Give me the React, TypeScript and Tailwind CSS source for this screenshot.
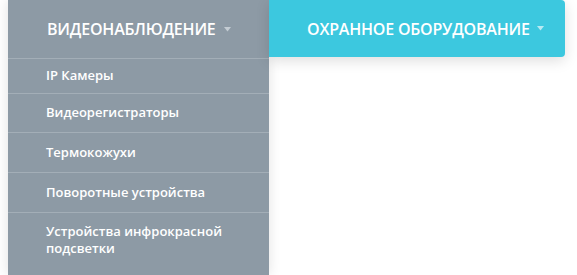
const items = [
  { label: 'IP Камеры', h: 'h-[35px]' },
  { label: 'Видеорегистраторы', h: 'h-[39px]' },
  { label: 'Термокожухи', h: 'h-[40px]' },
  { label: 'Поворотные устройства', h: 'h-[40px]' },
];

function Caret({ className }: { className?: string }) {
  return (
    <svg width="7" height="5" viewBox="0 0 7 5" className={className}>
      <path d="M0 0 L7 0 L3.5 4.5 Z" fill="currentColor" />
    </svg>
  );
}

export default function App() {
  return (
    <div
      className="flex h-[275px] w-[577px] overflow-hidden bg-white"
      style={{ fontFamily: '"Open Sans", "Noto Sans", sans-serif' }}
    >
      <nav className="ml-2 flex w-[261px] flex-col bg-[#8d9aa5] text-white shadow-[0_0_12px_rgba(0,0,0,0.12)]">
        <div className="flex h-[58px] items-center pl-[39px] text-[16px] font-semibold tracking-[-0.2px]">
          ВИДЕОНАБЛЮДЕНИЕ
          <Caret className="ml-[8px] text-[#c4ccd3]" />
        </div>
        {items.map((it) => (
          <div
            key={it.label}
            className={`flex ${it.h} items-center border-t border-[#a3aeb7] pl-[38px] text-[13px] font-semibold`}
          >
            {it.label}
          </div>
        ))}
        <div className="flex flex-col border-t border-[#a3aeb7] pt-[10px] pl-[38px] text-[13px] leading-[17px] font-semibold">
          <span>Устройства инфрокрасной</span>
          <span>подсветки</span>
        </div>
      </nav>
      <div className="flex h-[57px] w-[296px] items-center rounded-r-[4px] bg-[#3cc8df] pl-[38px] text-[16px] font-semibold tracking-[-0.2px] text-white shadow-[0_4px_14px_rgba(0,0,0,0.13)]">
        ОХРАННОЕ ОБОРУДОВАНИЕ
        <Caret className="ml-[7px] text-[#b8eaf3]" />
      </div>
    </div>
  );
}
